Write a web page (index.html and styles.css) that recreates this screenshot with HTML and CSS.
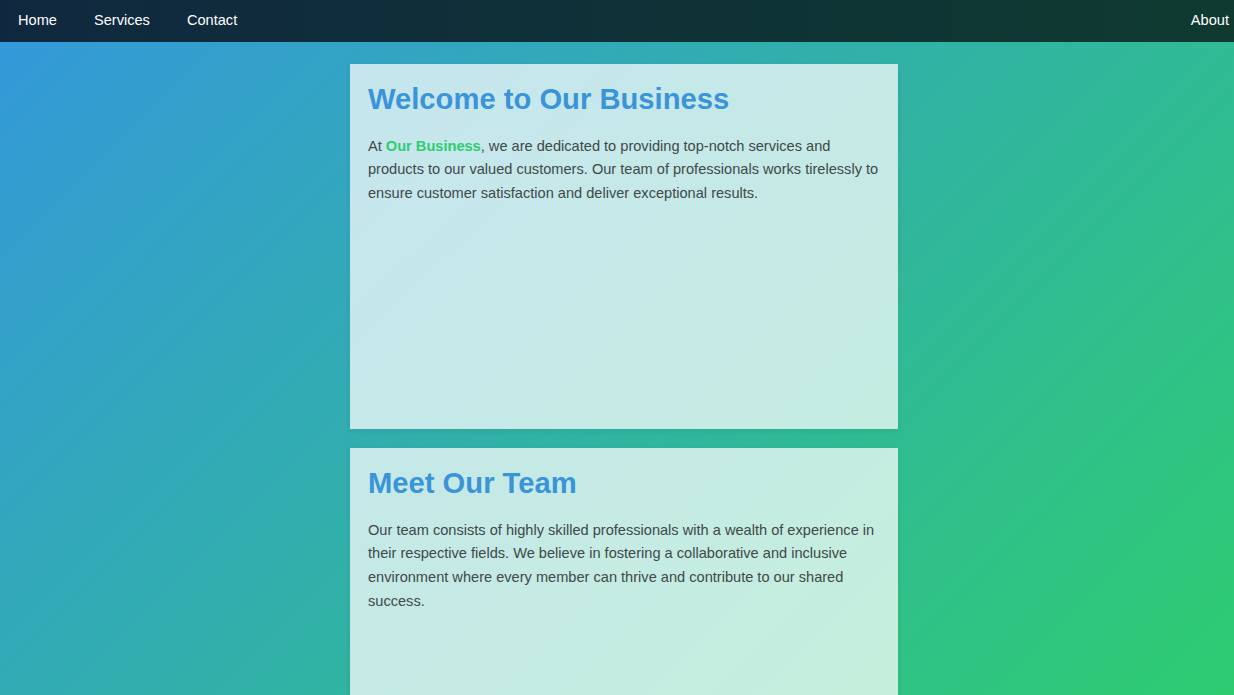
FILE: index.html
```html
<!DOCTYPE html>
<html lang="en">
<head>
<meta charset="utf-8">
<title>Our Business</title>
<link rel="stylesheet" href="styles.css">
</head>
<body>
<nav class="nav">
  <div class="nav-left">
    <a class="nav-link" href="#">Home</a>
    <a class="nav-link" href="#">Services</a>
    <a class="nav-link" href="#">Contact</a>
  </div>
  <a class="nav-link nav-about" href="#">About</a>
</nav>
<main class="main">
  <section class="card">
    <h1 class="card-title">Welcome to Our Business</h1>
    <p class="card-text">At <strong class="brand">Our Business</strong>, we are dedicated to providing top-notch services and products to our valued customers. Our team of professionals works tirelessly to ensure customer satisfaction and deliver exceptional results.</p>
  </section>
  <section class="card">
    <h1 class="card-title">Meet Our Team</h1>
    <p class="card-text">Our team consists of highly skilled professionals with a wealth of experience in their respective fields. We believe in fostering a collaborative and inclusive environment where every member can thrive and contribute to our shared success.</p>
  </section>
</main>
</body>
</html>
```
FILE: styles.css
```css
* { box-sizing: border-box; }
html, body { margin: 0; padding: 0; }
body {
  font-family: "Liberation Sans", Arial, sans-serif;
  min-height: 100vh;
  background: linear-gradient(135deg, #3498db 0%, #2ecc71 100%) fixed;
  overflow: hidden;
}
.nav {
  height: 42px;
  display: flex;
  align-items: center;
  justify-content: space-between;
  padding-right: 5px;
  padding-bottom: 2px;
  background: linear-gradient(90deg, #10283f 0%, #0e3a30 100%);
}
.nav-left { display: flex; }
.nav-link {
  color: #ffffff;
  text-decoration: none;
  font-size: 14.6px;
  padding: 0 18px;
}
.nav-link + .nav-link { margin-left: 1px; }
.nav-about { padding: 0; }
.main {
  display: flex;
  flex-direction: column;
  align-items: center;
  gap: 19px;
  padding: 22px 0 0 14px;
}
.card {
  width: 548px;
  min-height: 365px;
  padding: 16px 18px;
  background: rgba(255, 255, 255, 0.72);
  box-shadow: 0 2px 6px rgba(0, 0, 0, 0.08);
}
.card-title {
  margin: 0 0 16.6px;
  font-size: 29.2px;
  line-height: 38px;
  color: #3a94d8;
  font-weight: bold;
}
.card-text {
  margin: 0;
  font-size: 14.6px;
  line-height: 23.8px;
  color: #3f4848;
}
.brand { color: #2ecc71; }
```
